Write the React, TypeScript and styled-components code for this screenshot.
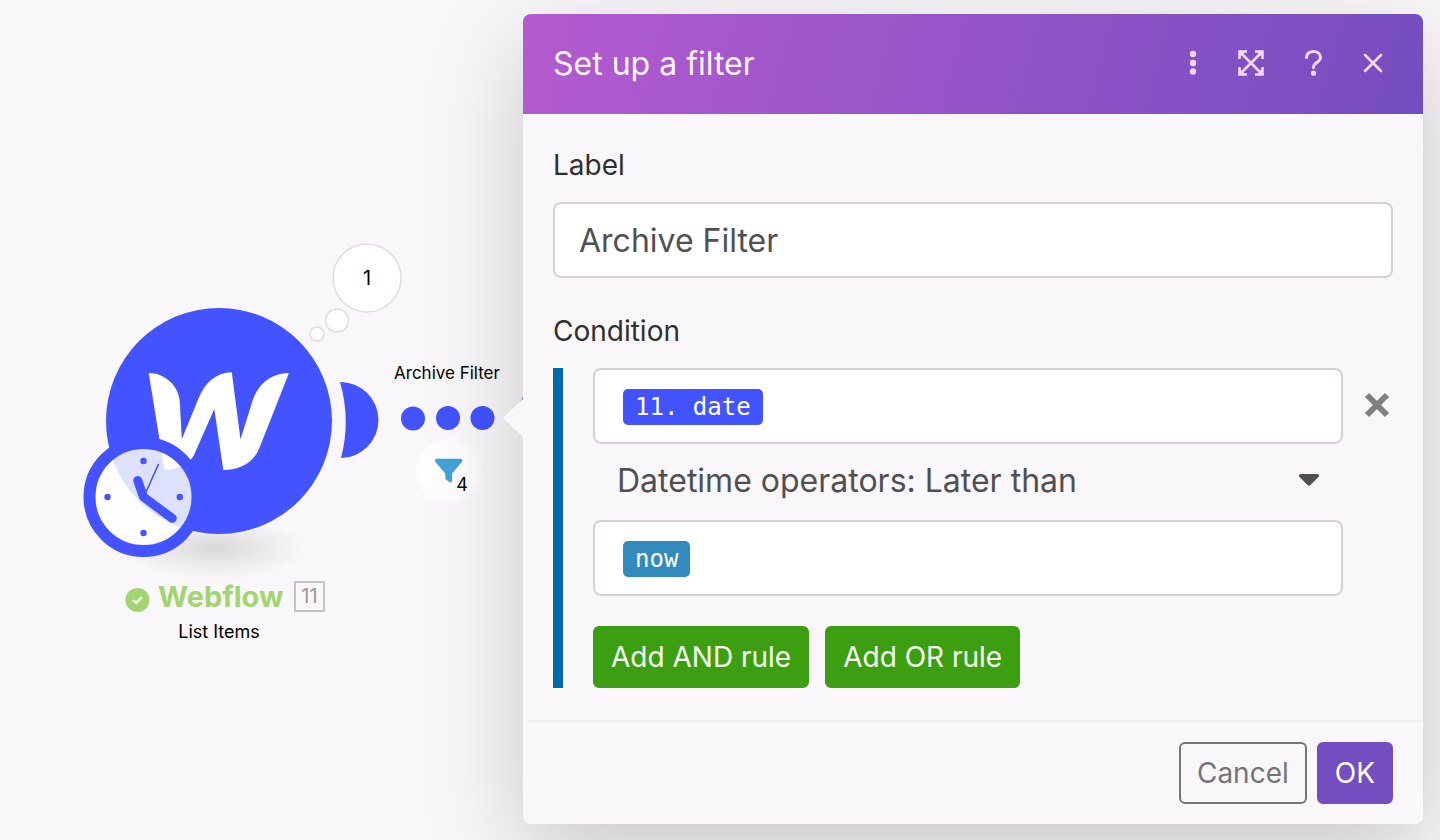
import React, { useState } from "react";
import styled, { createGlobalStyle } from "styled-components";

const GlobalStyle = createGlobalStyle`
  *, *::before, *::after { box-sizing: border-box; }
  body {
    margin: 0;
    background: #f9f7fa;
    font-family: Inter, "Liberation Sans", sans-serif;
    font-optical-sizing: none;
    color: #2f2f32;
  }
  button, input, select { font: inherit; margin: 0; }
`;

const Page = styled.main`
  display: flex;
  min-height: 100vh;
  overflow: hidden;
`;

const Canvas = styled.section`
  position: relative;
  flex: 0 0 523px;
`;

const Scene = styled.svg`
  position: absolute;
  top: 0;
  left: 0;
  overflow: visible;
`;

const CanvasText = styled.div<{ $x: number; $y: number; $size?: number }>`
  position: absolute;
  left: ${(p) => p.$x}px;
  top: ${(p) => p.$y}px;
  transform: translate(-50%, -50%);
  font-size: ${(p) => p.$size ?? 18}px;
  line-height: 24px;
  white-space: nowrap;
  color: #000;
`;

const Caption = styled.div`
  position: absolute;
  left: 125px;
  top: 578px;
  width: 200px;
  display: flex;
  align-items: center;
`;

const ModuleName = styled.h2`
  margin: 0 0 0 8px;
  font-size: 29px;
  line-height: 38px;
  font-weight: 700;
  color: #a3d471;
`;

const ModuleNumber = styled.span`
  width: 31px;
  height: 31px;
  margin: 0 0 2px auto;
  border: 2px solid #c4c3c6;
  font-size: 20px;
  line-height: 26px;
  text-align: center;
  color: #98979a;
`;

const Dialog = styled.form`
  position: relative;
  flex: 1;
  align-self: flex-start;
  margin: 14px 17px 16px 0;
  border-radius: 8px;
  background: #f9f7fa;
  box-shadow: 0 30px 100px rgba(0, 0, 0, 0.2);
`;

const Pointer = styled.span`
  position: absolute;
  left: -20px;
  top: 384px;
  width: 21px;
  height: 40px;
  background: #f9f7fa;
  clip-path: polygon(0 50%, 100% 0, 100% 100%);
`;

const Header = styled.header`
  display: flex;
  align-items: center;
  height: 100px;
  padding: 0 36px 0 30px;
  border-radius: 8px 8px 0 0;
  background: linear-gradient(105deg, #b45bcf 0%, #744dc0 100%);
`;

const Title = styled.h1`
  flex: 1;
  margin: 0;
  font-size: 32px;
  line-height: 40px;
  font-weight: 400;
  color: #fdf3ff;
`;

const HeaderActions = styled.div`
  display: flex;
  align-items: center;
  gap: 32px;
  padding-bottom: 2px;
`;

const IconButton = styled.button`
  display: flex;
  padding: 0;
  border: 0;
  background: none;
  color: #f1d8fb;
  cursor: pointer;
`;

const Body = styled.div`
  padding: 32px 30px;
`;

const FieldLabel = styled.label`
  display: block;
  margin-bottom: 18px;
  font-size: 28px;
  line-height: 38px;
`;

const TextInput = styled.input`
  display: block;
  width: 100%;
  height: 76px;
  margin-bottom: 34px;
  padding: 0 24px;
  border: 2px solid #d3d1d6;
  border-radius: 8px;
  background: #fff;
  font-size: 32px;
  color: #505053;
`;

const Condition = styled.div`
  display: flex;
  border-left: 10px solid #0069ab;
  padding-left: 30px;
`;

const Rules = styled.div`
  flex: 1;
`;

const TokenInput = styled.div`
  display: flex;
  align-items: center;
  height: 76px;
  padding: 2px 28px 0;
  border: 2px solid #d3d1d6;
  border-radius: 8px;
  background: #fff;
`;

const Token = styled.span<{ $color: string }>`
  padding: 0 12px;
  border-radius: 5px;
  background: ${(p) => p.$color};
  color: #fff;
  font-family: "DejaVu Sans Mono", monospace;
  font-size: 24px;
  line-height: 36px;
`;

const SelectRow = styled.div`
  display: flex;
  align-items: center;
  position: relative;
  padding-bottom: 4px;
`;

const OperatorSelect = styled.select`
  flex: 1;
  height: 72px;
  padding: 0 60px 0 24px;
  border: 0;
  background: none;
  appearance: none;
  font-size: 32px;
  color: #505053;
`;

const Caret = styled.svg`
  position: absolute;
  right: 23px;
  pointer-events: none;
`;

const RemoveButton = styled(IconButton)`
  align-self: flex-start;
  width: 50px;
  height: 74px;
  padding-left: 18px;
  align-items: center;
  justify-content: center;
  color: #807f82;
`;

const RuleActions = styled.div`
  display: flex;
  gap: 16px;
  margin-top: 30px;
`;

const Button = styled.button<{ $bg: string; $fg: string; $line: string }>`
  height: 62px;
  padding: 0 16px;
  border: 2px solid ${(p) => p.$line};
  border-radius: 6px;
  background: ${(p) => p.$bg};
  color: ${(p) => p.$fg};
  font-size: 28px;
  line-height: 38px;
  cursor: pointer;
`;

const Footer = styled.footer`
  display: flex;
  justify-content: flex-end;
  gap: 10px;
  margin-left: 5px;
  padding: 20px 30px;
  border-top: 2px solid #f0eef1;
`;

const BLUE = "#4353ff";

function CanvasScene() {
  return (
    <Scene width="523" height="680" viewBox="0 0 523 680" aria-hidden="true">
      <defs>
        <radialGradient id="ground">
          <stop offset="0" stopColor="#000" stopOpacity="0.13" />
          <stop offset="0.5" stopColor="#000" stopOpacity="0.06" />
          <stop offset="1" stopColor="#000" stopOpacity="0" />
        </radialGradient>
        <radialGradient id="halo">
          <stop offset="0.8" stopColor="#fff" stopOpacity="0.8" />
          <stop offset="1" stopColor="#fff" stopOpacity="0.5" />
        </radialGradient>
      </defs>
      <ellipse cx="215" cy="548" rx="92" ry="32" fill="url(#ground)" />
      <g fill="#fff" stroke="#dedce0" strokeWidth="1.5">
        <circle cx="367" cy="278" r="34" />
        <circle cx="337" cy="320.5" r="11.5" />
        <circle cx="317" cy="334" r="7" />
      </g>
      <circle cx="219" cy="421" r="113" fill={BLUE} />
      <path
        fill="#fff"
        d="M148.7 373 C165 373 179.200 386 179.800 402 L181.8 439.3 L198.3 399 C205 382 216 372.8 231.8 372.3 L240.5 439.3 L252.5 401 C258 384 271 373.2 289 373 L259 449 C253 463 240 470 223.3 470 L214.3 409 L194 455 C189 464 179 469 164.5 470 Z"
      />
      <path fill={BLUE} d="M340 382 A38 38 0 0 1 341 458 Q351 420 340 382 Z" />
      <circle cx="413" cy="418.5" r="12" fill={BLUE} />
      <circle cx="448" cy="418" r="12" fill={BLUE} />
      <circle cx="482.5" cy="418" r="12" fill={BLUE} />
      <circle cx="554" cy="415" r="36" fill={BLUE} />

      <circle cx="143.5" cy="497" r="49" fill="#fff" fillOpacity="0.82" />
      <circle cx="143.5" cy="497" r="54" fill="none" stroke={BLUE} strokeWidth="12" />
      <g fill={BLUE}>
        <circle cx="143.5" cy="461" r="3.2" />
        <circle cx="143.5" cy="533" r="3.2" />
        <circle cx="107.5" cy="497" r="3.2" />
        <circle cx="179.8" cy="497" r="3.2" />
      </g>
      <path
        fill="none"
        stroke={BLUE}
        strokeWidth="9"
        strokeLinecap="round"
        strokeLinejoin="round"
        d="M137.8 480.5 L143.5 497 L172.3 518.3"
      />
      <path stroke={BLUE} strokeWidth="1.6" strokeLinecap="round" d="M146.5 491 L158.3 464.5" />

      <circle cx="448.5" cy="471" r="33" fill="url(#halo)" />
      <path
        fill="#43a1da"
        d="M436 458.8 H461 Q463.2 460 461.8 462 L452 473.5 V481 Q451.5 483 449.5 482.3 L446 479.5 Q445.3 479 445.3 477.5 V473.5 L435.4 462 Q434.3 460 436 458.8 Z"
      />
    </Scene>
  );
}

function CheckBadge() {
  return (
    <svg width="25" height="30" viewBox="0 0 25 30" aria-hidden="true">
      <circle cx="12.5" cy="18" r="12" fill="#a3d471" />
      <path d="M8 18 L11.2 21 L17 15" fill="none" stroke="#fff" strokeWidth="2.2" />
    </svg>
  );
}

export default function App() {
  const [label, setLabel] = useState("Archive Filter");

  return (
    <>
      <GlobalStyle />
      <Page>
        <Canvas aria-label="Scenario">
          <CanvasScene />
          <CanvasText $x={367} $y={278} $size={20}>1</CanvasText>
          <CanvasText $x={447} $y={373} $size={17}>Archive Filter</CanvasText>
          <CanvasText $x={462} $y={485}>4</CanvasText>
          <Caption>
            <CheckBadge />
            <ModuleName>Webflow</ModuleName>
            <ModuleNumber>11</ModuleNumber>
          </Caption>
          <CanvasText $x={219} $y={632}>List Items</CanvasText>
        </Canvas>

        <Dialog onSubmit={(e) => e.preventDefault()} aria-labelledby="title">
          <Pointer />
          <Header>
            <Title id="title">Set up a filter</Title>
            <HeaderActions>
              <IconButton type="button" aria-label="More">
                <svg width="26" height="28" viewBox="0 0 26 28" fill="currentColor">
                  <circle cx="14" cy="5" r="3.2" />
                  <circle cx="14" cy="14" r="3.2" />
                  <circle cx="14" cy="22.5" r="3.2" />
                </svg>
              </IconButton>
              <IconButton type="button" aria-label="Expand">
                <svg width="28" height="28" viewBox="0 0 28 28" fill="none" stroke="currentColor" strokeWidth="2.6">
                  <path d="M3 3 L25 25 M25 3 L3 25" />
                  <path d="M2.500 10 V2.500 H10 M18 2.500 H25.500 V10 M25.500 18 V25.500 H18 M10 25.500 H2.500 V18" />
                  <path d="M2 2 H9 L2 9 Z M26 2 V9 L19 2 Z M26 26 H19 L26 19 Z M2 26 V19 L9 26 Z" fill="currentColor" stroke="none" />
                </svg>
              </IconButton>
              <IconButton type="button" aria-label="Help">
                <svg width="30" height="28" viewBox="0 0 30 28" fill="none" stroke="currentColor" strokeWidth="3" strokeLinecap="round" strokeLinejoin="round">
                  <path d="M9.500 8.500 C9.500 4.500 12.500 2.500 16.500 2.500 C20.500 2.500 23.500 5 23.500 8.500 C23.500 13.500 16.500 13 16.500 18.500" />
                  <circle cx="16.5" cy="24.2" r="2.6" fill="currentColor" stroke="none" />
                </svg>
              </IconButton>
              <IconButton type="button" aria-label="Close">
                <svg width="28" height="28" viewBox="0 0 28 28" fill="none" stroke="currentColor" strokeWidth="2.6" strokeLinecap="round">
                  <path d="M6 6 L22 22 M22 6 L6 22" />
                </svg>
              </IconButton>
            </HeaderActions>
          </Header>

          <Body>
            <FieldLabel htmlFor="label">Label</FieldLabel>
            <TextInput id="label" value={label} onChange={(e) => setLabel(e.target.value)} />
            <FieldLabel as="div" id="condition">Condition</FieldLabel>
            <Condition role="group" aria-labelledby="condition">
              <Rules>
                <TokenInput role="textbox" tabIndex={0} aria-label="First value">
                  <Token $color="#4353ff">11. date</Token>
                </TokenInput>
                <SelectRow>
                  <OperatorSelect aria-label="Operator">
                    <option>Datetime operators: Later than</option>
                  </OperatorSelect>
                  <Caret width="22" height="14" viewBox="0 0 22 14" aria-hidden="true">
                    <path fill="#505053" d="M2.500 1 H19.500 Q22 1.500 20.500 4 L12.500 12 Q11 13.500 9.500 12 L1.500 4 Q0 1.500 2.500 1 Z" />
                  </Caret>
                </SelectRow>
                <TokenInput role="textbox" tabIndex={0} aria-label="Second value">
                  <Token $color="#328bbd">now</Token>
                </TokenInput>
                <RuleActions>
                  <Button type="button" $bg="#3c9f12" $line="#3c9f12" $fg="#f7fff2">Add AND rule</Button>
                  <Button type="button" $bg="#3c9f12" $line="#3c9f12" $fg="#f7fff2">Add OR rule</Button>
                </RuleActions>
              </Rules>
              <RemoveButton type="button" aria-label="Remove rule">
                <svg width="26" height="26" viewBox="0 0 26 26" stroke="currentColor" strokeWidth="6">
                  <path d="M3 3 L23 23 M23 3 L3 23" />
                </svg>
              </RemoveButton>
            </Condition>
          </Body>

          <Footer>
            <Button type="button" $bg="transparent" $line="#757477" $fg="#757477">Cancel</Button>
            <Button type="submit" $bg="#744dc0" $line="#744dc0" $fg="#fff">OK</Button>
          </Footer>
        </Dialog>
      </Page>
    </>
  );
}
